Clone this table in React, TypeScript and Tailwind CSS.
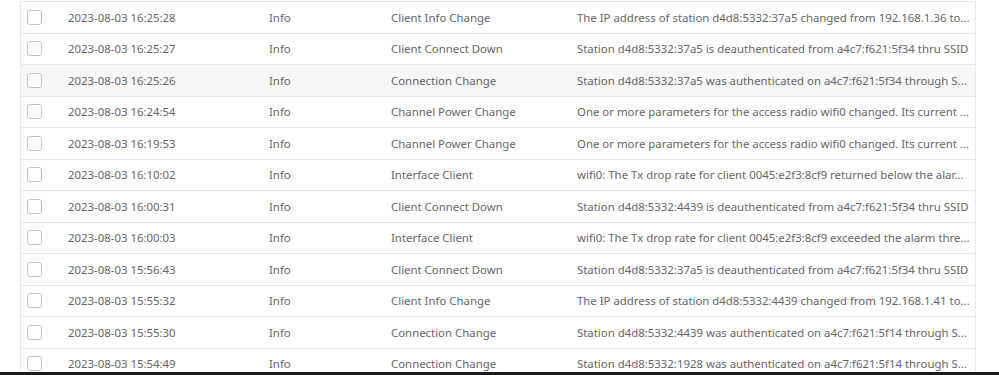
import React from "react";

const rows: [string, string, string, string][] = [
  ["2023-08-03 16:25:28", "Info", "Client Info Change", "The IP address of station d4d8:5332:37a5 changed from 192.168.1.36 to..."],
  ["2023-08-03 16:25:27", "Info", "Client Connect Down", "Station d4d8:5332:37a5 is deauthenticated from a4c7:f621:5f34 thru SSID"],
  ["2023-08-03 16:25:26", "Info", "Connection Change", "Station d4d8:5332:37a5 was authenticated on a4c7:f621:5f34 through S..."],
  ["2023-08-03 16:24:54", "Info", "Channel Power Change", "One or more parameters for the access radio wifi0 changed. Its current ..."],
  ["2023-08-03 16:19:53", "Info", "Channel Power Change", "One or more parameters for the access radio wifi0 changed. Its current ..."],
  ["2023-08-03 16:10:02", "Info", "Interface Client", "wifi0: The Tx drop rate for client 0045:e2f3:8cf9 returned below the alar..."],
  ["2023-08-03 16:00:31", "Info", "Client Connect Down", "Station d4d8:5332:4439 is deauthenticated from a4c7:f621:5f34 thru SSID"],
  ["2023-08-03 16:00:03", "Info", "Interface Client", "wifi0: The Tx drop rate for client 0045:e2f3:8cf9 exceeded the alarm thre..."],
  ["2023-08-03 15:56:43", "Info", "Client Connect Down", "Station d4d8:5332:37a5 is deauthenticated from a4c7:f621:5f34 thru SSID"],
  ["2023-08-03 15:55:32", "Info", "Client Info Change", "The IP address of station d4d8:5332:4439 changed from 192.168.1.41 to..."],
  ["2023-08-03 15:55:30", "Info", "Connection Change", "Station d4d8:5332:4439 was authenticated on a4c7:f621:5f14 through S..."],
  ["2023-08-03 15:54:49", "Info", "Connection Change", "Station d4d8:5332:1928 was authenticated on a4c7:f621:5f14 through S..."],
];

export default function App() {
  return (
    <div className="relative h-[375px] w-[999px] overflow-hidden bg-white" style={{ fontFamily: '"Noto Sans", sans-serif' }}>
      <div className="ml-[20px] mt-px w-[956px] border-t border-l border-r border-[#e9e9e9]">
        {rows.map((r, i) => (
          <div
            key={i}
            className={`grid h-[31.5px] grid-cols-[47px_201px_122px_186px_1fr] items-center border-b border-[#e9e9e9] text-[11.4px] text-[#666] ${i === 2 ? "bg-[#f7f7f7]" : "bg-white"}`}
          >
            <div className="pl-[6px]">
              <div className="h-[15px] w-[15px] rounded-[3px] border border-[#c4c4c4] bg-white" />
            </div>
            <div className="whitespace-nowrap">{r[0]}</div>
            <div className="whitespace-nowrap">{r[1]}</div>
            <div className="whitespace-nowrap">{r[2]}</div>
            <div className="whitespace-nowrap">{r[3]}</div>
          </div>
        ))}
      </div>
      <div className="absolute bottom-0 left-0 h-[3px] w-full bg-[#1a1a1a]" />
    </div>
  );
}
